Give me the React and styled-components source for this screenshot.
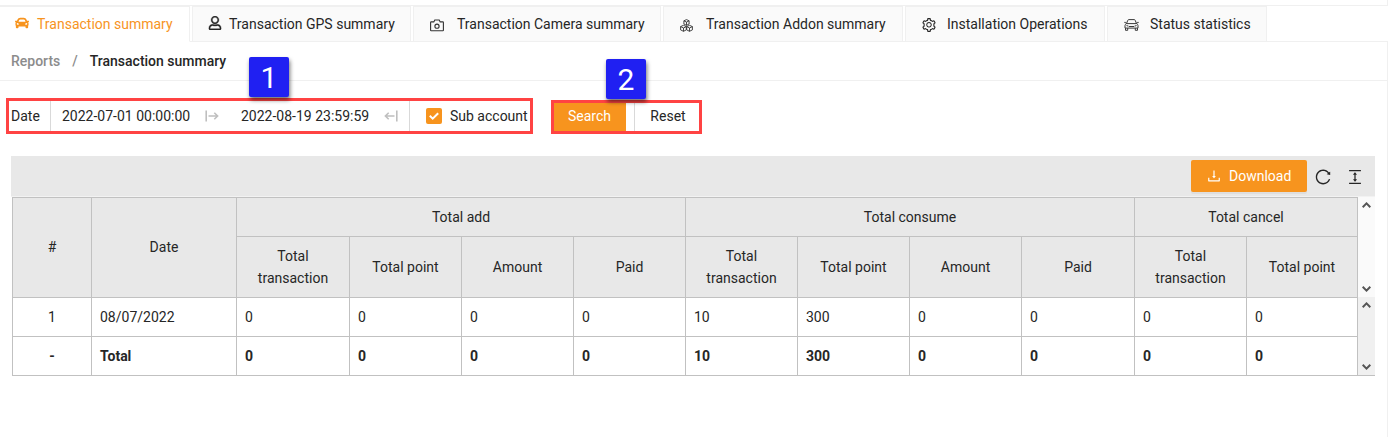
import React from "react";
import styled, { createGlobalStyle } from "styled-components";
import { FaCar, FaRegUser } from "react-icons/fa";
import {
  AiOutlineSetting,
  AiOutlineDownload,
  AiOutlineReload,
  AiOutlineColumnHeight,
} from "react-icons/ai";

const Global = createGlobalStyle`
  *, *::before, *::after { box-sizing: border-box; }
  body {
    margin: 0;
    background: #fff;
    color: #262626;
    font-family: Roboto, "Liberation Sans", sans-serif;
    font-size: 14px;
    line-height: 22px;
  }
  svg { display: block; flex: none; }
`;

const orange = "#f7941e";
const line = "#f0f0f0";
const gridLine = "#c1c1c1";

const Page = styled.div`
  width: 1388px;
  height: 437px;
  overflow: hidden;
`;
const TopStrip = styled.div`
  height: 6px;
  border-right: 1px solid ${line};
  border-bottom: 1px solid ${line};
`;
const Tabs = styled.nav`
  display: flex;
  gap: 2px;
  height: 36px;
  box-shadow: inset 0 -1px ${line};
`;
const Tab = styled.div`
  display: flex;
  align-items: center;
  width: ${(p) => p.$width}px;
  padding-left: ${(p) => p.$pad}px;
  gap: ${(p) => p.$gap}px;
  white-space: nowrap;
  color: ${(p) => (p.$active ? orange : "#262626")};
  background: ${(p) => (p.$active ? "#fff" : "#fafafa")};
  border: 1px solid ${line};
  border-bottom-color: ${(p) => (p.$active ? "#fff" : line)};
  border-left-width: ${(p) => (p.$active ? 0 : 1)}px;
`;
const TabIcon = styled.span`
  padding-top: ${(p) => p.$down || 0}px;
  padding-bottom: ${(p) => p.$up || 0}px;
`;
const Content = styled.main`
  height: 395px;
  border-right: 1px solid ${line};
`;
const Breadcrumb = styled.div`
  display: flex;
  align-items: center;
  gap: 12px;
  height: 39px;
  padding-left: 11px;
  border-bottom: 1px solid ${line};
  font-weight: 500;
  color: #262626;
`;
const Crumb = styled.span`
  color: #8c8c8c;
`;
const Filters = styled.div`
  display: flex;
  align-items: flex-end;
  gap: 18px;
  height: 53px;
  padding-left: 6px;
`;
const FilterGroup = styled.div`
  position: relative;
  display: flex;
  align-items: center;
  width: ${(p) => p.$width}px;
  height: ${(p) => p.$height}px;
  border: 3px solid #ff4343;
  white-space: nowrap;
`;
const Label = styled.span`
  width: 41px;
  padding-left: 2px;
`;
const Divider = styled.span`
  width: 1px;
  height: 30px;
  background: #d9d9d9;
`;
const DateValue = styled.span`
  width: ${(p) => p.$width}px;
`;
const DateRange = styled.div`
  display: flex;
  align-items: center;
  width: 358px;
  padding-left: 11px;
`;
const CheckLabel = styled.label`
  display: flex;
  align-items: center;
  gap: 8px;
  padding-left: 16px;
`;
const CheckBox = styled.span`
  display: flex;
  align-items: center;
  justify-content: center;
  width: 16px;
  height: 16px;
  border-radius: 2px;
  background: ${orange};
`;
const SearchButton = styled.button`
  width: 72px;
  height: 28px;
  padding: 0 1px 2px 0;
  border: 0;
  background: ${orange};
  color: #fff;
  font: inherit;
`;
const ResetButton = styled.button`
  width: 65px;
  height: 28px;
  margin-left: 8px;
  padding: 0 0 2px 2px;
  border: 0;
  border-left: 1px solid #d9d9d9;
  background: #fff;
  color: #262626;
  font: inherit;
`;
const Badge = styled.span`
  position: absolute;
  left: ${(p) => p.$left}px;
  top: -44px;
  width: 40px;
  height: 40px;
  border-radius: 2px;
  background: #2020f2;
  color: #fff;
  font-size: 30px;
  line-height: 42px;
  text-align: center;
  box-shadow: 1px 3px 4px rgba(0, 0, 0, 0.55);
`;
const Panel = styled.section`
  margin: 22px 12px 0 11px;
`;
const Toolbar = styled.div`
  display: flex;
  align-items: center;
  justify-content: flex-end;
  height: 41px;
  padding-right: 11px;
  background: #e8e8e8;
  border-bottom: 1px solid #f2f2f2;
`;
const DownloadButton = styled.button`
  display: flex;
  align-items: center;
  gap: 7px;
  width: 116px;
  height: 32px;
  margin-right: 7px;
  padding: 0 0 0 15px;
  border: 0;
  border-radius: 2px;
  background: ${orange};
  box-shadow: 0 2px 0 rgba(0, 0, 0, 0.045);
  color: #fff;
  font: inherit;
`;
const ToolIcon = styled.span`
  width: 18px;
  margin-left: ${(p) => p.$left || 0}px;
  padding-top: 2px;
`;
const TableFrame = styled.div`
  display: flex;
  margin-left: 1px;
  border-bottom: 1px solid ${gridLine};
  height: 179px;
`;
const Grid = styled.div`
  display: grid;
  grid-template-columns: 79px 145px 113px repeat(6, 112px) 113px 112px 111px;
  grid-template-rows: 39px 61px 39px 39px;
  width: 1346px;
  height: 179px;
  border-left: 1px solid ${gridLine};
  border-top: 1px solid ${gridLine};
`;
const HeadCell = styled.div`
  display: flex;
  align-items: center;
  justify-content: center;
  grid-column: span ${(p) => p.$cols || 1};
  grid-row: span ${(p) => p.$rows || 1};
  padding: 0 8px ${(p) => (p.$rows ? 1 : 0)}px;
  background: #e8e8e8;
  border-right: 1px solid ${gridLine};
  border-bottom: 1px solid ${gridLine};
  text-align: center;
`;
const Cell = styled.div`
  display: flex;
  align-items: center;
  justify-content: ${(p) => (p.$center ? "center" : "flex-start")};
  padding: 0 8px;
  border-right: 1px solid ${gridLine};
  border-bottom: 1px solid ${gridLine};
  font-weight: ${(p) => (p.$bold ? 700 : 400)};
`;
const ScrollColumn = styled.div`
  width: 17px;
`;
const Scrollbar = styled.div`
  display: flex;
  flex-direction: column;
  align-items: center;
  justify-content: space-between;
  height: ${(p) => p.$height}px;
  padding: 5px 0;
  background: ${(p) => p.$color};
`;

const Chevron = ({ down }) => (
  <svg width="9" height="6" viewBox="0 0 9 6" fill="none" stroke="#555" strokeWidth="2">
    <path d={down ? "M.7.8l3.8 3.8L8.3.8" : "M.7 5.2l3.8-3.8 3.8 3.8"} />
  </svg>
);

const RangeArrow = ({ flip }) => (
  <svg width="14" height="12" viewBox="0 0 14 12" fill="none" stroke="#bfbfbf" strokeWidth="1.6">
    <path
      transform={flip ? "translate(14 0) scale(-1 1)" : undefined}
      d="M1.2.5v11M3.5 6h9M9.3 2.8L12.6 6 9.3 9.2"
    />
  </svg>
);

const CameraIcon = () => (
  <svg width="14" height="13" viewBox="0 0 14 13" fill="none" stroke="#333" strokeWidth="1.1">
    <path d="M1.2 2.9h2.6l1-1.9h4.4l1 1.9h2.6c.3 0 .6.3.6.6v7.7c0 .3-.3.6-.6.6H1.2c-.3 0-.6-.3-.6-.6V3.5c0-.3.3-.6.6-.6z" />
    <circle cx="7" cy="7.2" r="2.1" />
  </svg>
);

const CubesIcon = () => (
  <svg width="13" height="13" viewBox="0 0 13 13" fill="none" stroke="#333" strokeWidth=".9" strokeLinejoin="round">
    <path d="M6.5.6l2.6 1.2v3.2L6.5 6.3 3.9 5V1.8zM3.9 1.8l2.6 1.3 2.6-1.3M6.5 3.1v3.2" />
    <path d="M3.5 6.3l2.8 1.3v3.3l-2.8 1.4-2.9-1.4V7.6zM.6 7.6l2.9 1.4 2.8-1.4M3.5 9v3.3" />
    <path d="M9.5 6.3l2.9 1.3v3.3l-2.9 1.4-2.8-1.4V7.6zM6.7 7.6L9.5 9l2.9-1.4M9.5 9v3.3" />
  </svg>
);

const CarOutline = () => (
  <svg width="15" height="12" viewBox="0 0 15 12" fill="none" stroke="#3a3a3a" strokeWidth="1">
    <path d="M2.5 4.6l1.3-3.3c.2-.5.5-.7 1-.7h5.4c.5 0 .8.2 1 .7l1.3 3.3M.3 3.4h1.4l.5 1.2M14.7 3.4h-1.4l-.5 1.2" />
    <path d="M2.3 4.6h10.4c.8.5 1.3 1.2 1.3 2v2.5H1V6.6c0-.8.5-1.5 1.3-2zM1.5 9.1v2.2h2.2V9.1M11.3 9.1v2.2h2.2V9.1" />
    <path d="M2.5 6.5l2 .7M12.5 6.5l-2 .7M5 7.5h5" />
  </svg>
);

const groups = [
  ["Total add", ["Total transaction", "Total point", "Amount", "Paid"]],
  ["Total consume", ["Total transaction", "Total point", "Amount", "Paid"]],
  ["Total cancel", ["Total transaction", "Total point"]],
];
const rows = [
  ["1", "08/07/2022", "0", "0", "0", "0", "10", "300", "0", "0", "0", "0"],
  ["-", "Total", "0", "0", "0", "0", "10", "300", "0", "0", "0", "0"],
];

export default function App() {
  return (
    <Page>
      <Global />
      <TopStrip />
      <Tabs>
        <Tab $active $width={190} $pad={15} $gap={8}>
          <TabIcon $up={2}><FaCar size={14} /></TabIcon>Transaction summary
        </Tab>
        <Tab $width={219} $pad={15} $gap={7}>
          <TabIcon $up={2}><FaRegUser size={14} stroke="currentColor" strokeWidth={12} /></TabIcon>Transaction GPS summary
        </Tab>
        <Tab $width={248} $pad={16} $gap={13}>
          <TabIcon $down={2}><CameraIcon /></TabIcon>Transaction Camera summary
        </Tab>
        <Tab $width={240} $pad={16} $gap={13}>
          <TabIcon $down={2}><CubesIcon /></TabIcon>Transaction Addon summary
        </Tab>
        <Tab $width={200} $pad={15} $gap={10}>
          <TabIcon $down={2}><AiOutlineSetting size={16} /></TabIcon>Installation Operations
        </Tab>
        <Tab $width={160} $pad={16} $gap={11}>
          <TabIcon $down={1}><CarOutline /></TabIcon>Status statistics
        </Tab>
      </Tabs>
      <Content>
        <Breadcrumb>
          <Crumb>Reports</Crumb>
          <Crumb>/</Crumb>
          <span>Transaction summary</span>
        </Breadcrumb>
        <Filters>
          <FilterGroup $width={527} $height={36}>
            <Label>Date</Label>
            <Divider />
            <DateRange>
              <DateValue $width={143}>2022-07-01 00:00:00</DateValue>
              <RangeArrow />
              <DateValue $width={22} />
              <DateValue $width={143}>2022-08-19 23:59:59</DateValue>
              <RangeArrow flip />
            </DateRange>
            <Divider />
            <CheckLabel>
              <CheckBox>
                <svg width="12" height="10" viewBox="0 0 12 10" fill="none" stroke="#fff" strokeWidth="2">
                  <path d="M1.8 4.8l2.9 2.9 5.5-5.5" />
                </svg>
              </CheckBox>
              Sub account
            </CheckLabel>
            <Badge $left={240}>1</Badge>
          </FilterGroup>
          <FilterGroup $width={151} $height={34}>
            <SearchButton>Search</SearchButton>
            <ResetButton>Reset</ResetButton>
            <Badge $left={52}>2</Badge>
          </FilterGroup>
        </Filters>
        <Panel>
          <Toolbar>
            <DownloadButton>
              <AiOutlineDownload size={16} />
              Download
            </DownloadButton>
            <ToolIcon><AiOutlineReload size={18} /></ToolIcon>
            <ToolIcon $left={14}><AiOutlineColumnHeight size={18} /></ToolIcon>
          </Toolbar>
          <TableFrame>
            <Grid>
              <HeadCell $rows={2}>#</HeadCell>
              <HeadCell $rows={2}>Date</HeadCell>
              {groups.map(([name, cols]) => (
                <HeadCell key={name} $cols={cols.length}>{name}</HeadCell>
              ))}
              {groups.flatMap(([name, cols]) =>
                cols.map((col) => <HeadCell key={name + col}>{col}</HeadCell>)
              )}
              {rows.flatMap((row, r) =>
                row.map((value, c) => (
                  <Cell key={`${r}-${c}`} $bold={r === 1} $center={c === 0}>{value}</Cell>
                ))
              )}
            </Grid>
            <ScrollColumn>
              <Scrollbar $height={100} $color="#fafafa"><Chevron /><Chevron down /></Scrollbar>
              <Scrollbar $height={78} $color="#f0f0f0"><Chevron /><Chevron down /></Scrollbar>
            </ScrollColumn>
          </TableFrame>
        </Panel>
      </Content>
    </Page>
  );
}
